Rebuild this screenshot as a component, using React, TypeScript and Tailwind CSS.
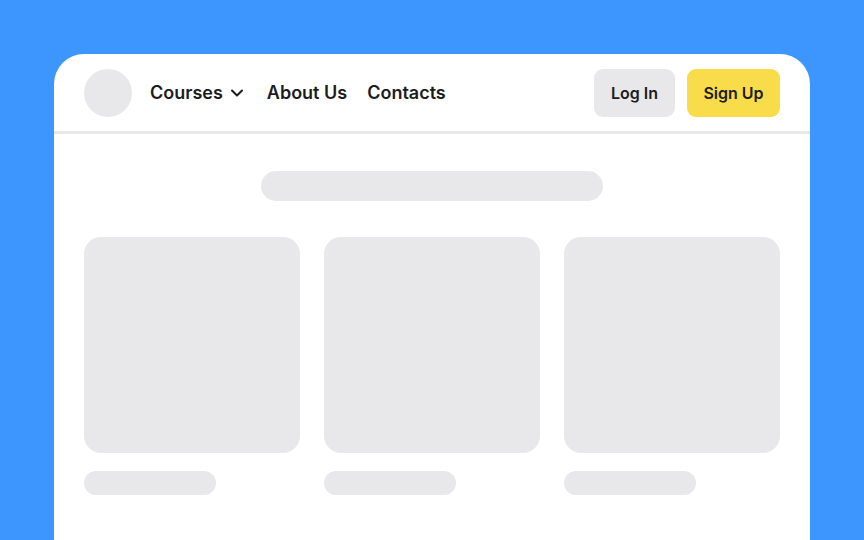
import { ChevronDown } from "lucide-react";

const columns = [0, 1, 2];

export default function App() {
  return (
    <div className="h-[540px] overflow-hidden bg-[#3d95fe] px-[54px] pt-[54px] font-['Inter',sans-serif] text-[#1c1c1f]">
      <div className="h-[520px] rounded-t-[30px] bg-white">
        <header className="flex items-center justify-between border-b-[3px] border-[#e8e8ea] px-[30px] pb-[14px] pt-[15px]">
          <div className="flex items-center">
            <div className="h-12 w-12 rounded-full bg-[#e8e8ea]" />
            <nav className="ml-[18px] flex items-center text-[18px] font-semibold">
              <button className="flex items-center gap-1">
                <span className="-mt-[2px]">Courses</span>
                <ChevronDown className="h-5 w-5" strokeWidth={2.4} />
              </button>
              <a className="-mt-[2px] ml-5">About Us</a>
              <a className="-mt-[2px] ml-[20px]">Contacts</a>
            </nav>
          </div>
          <div className="flex items-center gap-3 text-[16px] font-semibold">
            <button className="h-12 w-[81px] rounded-[9px] bg-[#e8e8ea]">Log In</button>
            <button className="h-12 w-[93px] rounded-[9px] bg-[#f9dc4a]">Sign Up</button>
          </div>
        </header>

        <main className="px-[30px] pt-[37px]">
          <div className="mx-auto h-[30px] w-[342px] rounded-full bg-[#e8e8ea]" />
          <div className="mt-9 grid grid-cols-3 gap-6">
            {columns.map((i) => (
              <div key={i}>
                <div className="h-[216px] rounded-[17px] bg-[#e8e8ea]" />
                <div className="mt-[18px] h-6 w-[132px] rounded-full bg-[#e8e8ea]" />
              </div>
            ))}
          </div>
        </main>
      </div>
    </div>
  );
}
